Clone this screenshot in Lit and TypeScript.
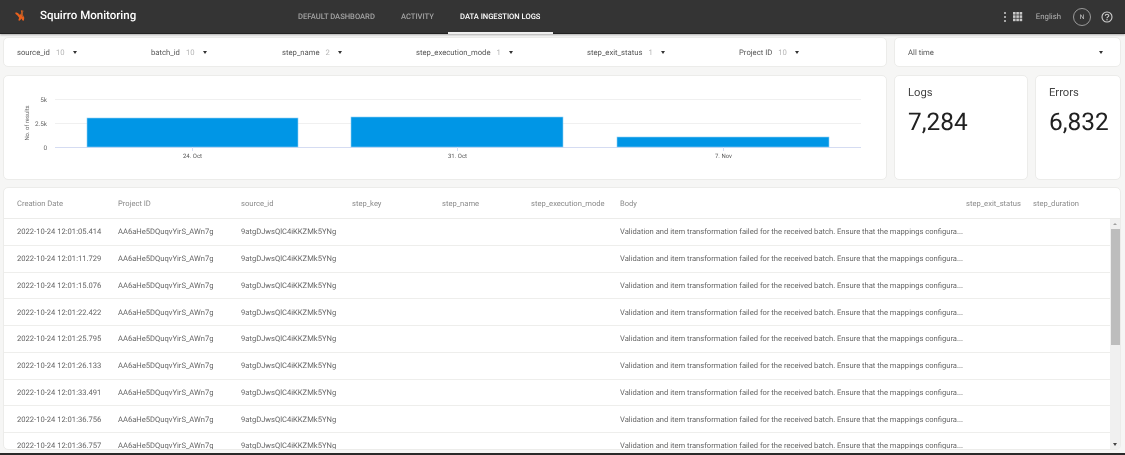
import { LitElement, html, css, svg } from "lit";
import { customElement } from "lit/decorators.js";

const filters: [string, string][] = [
  ["source_id", "10"], ["batch_id", "10"], ["step_name", "2"],
  ["step_execution_mode", "1"], ["step_exit_status", "1"], ["Project ID", "10"],
];
const columns = ["Creation Date", "Project ID", "source_id", "step_key", "step_name", "step_execution_mode", "Body", "step_exit_status", "step_duration"];
const times = ["05.414", "11.729", "15.076", "22.422", "25.795", "26.133", "33.491", "36.756", "36.757"];
const body = "Validation and item transformation failed for the received batch. Ensure that the mappings configura...";

@customElement("app-root")
export class AppRoot extends LitElement {
  static styles = css`
    :host { display: block; width: 1125px; height: 455px; overflow: hidden; background: #f6f6f5; font-family: Roboto, "Liberation Sans", sans-serif; color: #555; position: relative; text-rendering: geometricPrecision; filter: blur(0.3px); }
    header { height: 33px; background: #343434; border-bottom: 1px solid #222; box-shadow: 0 1px 2px rgba(0,0,0,.3); display: flex; align-items: stretch; color: #fff; box-sizing: content-box; }
    .brand { width: 298px; display: flex; align-items: center; padding-left: 14px; box-sizing: border-box; gap: 14px; font-size: 11.5px; font-weight: 500; padding-bottom: 3px; }
    nav { display: flex; }
    .tab { font-size: 7.6px; font-weight: 500; color: #a3a3a3; display: flex; align-items: center; padding-bottom: 1px; box-sizing: border-box; }
    .tab.one { width: 103px; }
    .tab.two { width: 47px; }
    .tab.active { color: #fff; width: 105px; padding-left: 12px; border-bottom: 2px solid #eee; padding-top: 1px; margin-bottom: -1px; }
    .right { margin-left: auto; display: flex; align-items: center; padding-right: 12px; }
    .dots { width: 2px; display: flex; flex-direction: column; gap: 2px; margin-right: 7px; }
    .dots i { width: 2px; height: 2px; border-radius: 50%; background: #ccc; }
    .lang { font-size: 7.8px; color: #b5b5b5; margin: 0 12px 0 13px; }
    .avatar { width: 16px; height: 16px; border: 1px solid #9a9a9a; border-radius: 50%; display: flex; align-items: center; justify-content: center; font-size: 6.5px; color: #ccc; margin-right: 10px; }
    main { padding: 3px 4px 0 3px; display: grid; grid-template-columns: 884px 227px; column-gap: 7px; }
    .card { background: #fff; border: 1px solid #ececea; border-radius: 5px; box-sizing: border-box; }
    .filters { height: 30px; display: grid; grid-template-columns: 134px 131px 134px 171px 152px 1fr; padding-left: 13px; align-items: center; font-size: 7.7px; color: #555; }
    .f { display: flex; align-items: center; }
    .f b { font-weight: 400; color: #b5b5b5; margin-left: 6px; }
    .caret { width: 0; height: 0; border-left: 2.5px solid transparent; border-right: 2.5px solid transparent; border-top: 3px solid #333; margin-left: 8px; }
    .time { height: 30px; display: flex; align-items: center; justify-content: space-between; padding: 0 17px 0 13px; font-size: 7.7px; }
    .second { display: grid; grid-template-columns: 884px 134px 86px; column-gap: 7px; padding: 8px 4px 0 3px; }
    .chart { height: 105px; display: block; }
    .chart svg { display: block; }
    .stat { height: 105px; padding: 10px 13px; color: #222; }
    .stat span { display: block; font-size: 11.2px; color: #444; line-height: 13px; }
    .stat strong { display: block; font-size: 24.4px; font-weight: 400; line-height: 28px; margin-top: 9px; color: #212121; }
    .table { margin: 7px 4px 0 3px; height: 263px; display: flex; flex-direction: column; overflow: hidden; }
    .row { display: grid; grid-template-columns: 101px 123px 111px 90px 89px 89px 346px 67px 1fr; padding-left: 13px; font-size: 7.6px; align-items: center; white-space: nowrap; }
    .head { height: 30px; flex: none; color: #8a8a8a; border-bottom: 1px solid #ececea; }
    .tbody { flex: 1; display: flex; min-height: 0; }
    .rows { flex: 1; min-width: 0; overflow: hidden; }
    .rows .row { height: 26.75px; box-sizing: border-box; border-bottom: 1px solid #eeeeec; color: #666; }
    .rows .row .b { grid-column: 7 / 10; }
    .sb { width: 10px; flex: none; background: #f0f0f0; display: flex; flex-direction: column; align-items: center; }
    .sb .up, .sb .down { height: 10px; width: 10px; display: flex; align-items: center; justify-content: center; flex: none; }
    .sb .up i { border-left: 2px solid transparent; border-right: 2px solid transparent; border-bottom: 2px solid #a0a0a0; }
    .sb .down { margin-top: auto; }
    .sb .down i { border-left: 2.5px solid transparent; border-right: 2.5px solid transparent; border-top: 3px solid #444; }
    .thumb { width: 9px; height: 116px; background: #bdbdbd; }
    .foot { position: absolute; left: 0; right: 0; top: 453px; height: 2px; background: #2a2a2a; }
  `;

  logo() {
    return svg`<svg width="12" height="13" viewBox="0 0 14 15" aria-hidden="true">
      <path d="M8 1.5 L11 2 L10 6 L12 10 L11.5 13.5 L9.5 13 L9 11 L6.5 13.5 L5 13 L6 10 L4 7.5 L1.5 5.5 L2 3.8 L4.5 4.5 L7 7 L8.5 4.5 Z" fill="#e8601c"/>
      <path d="M9.3 2.2 L10.6 2.4 L9.5 6 L10.8 9.5 L9.5 8.8 L8.6 6 Z" fill="#8d5a30"/>
    </svg>`;
  }

  grid() {
    const cells = [];
    for (let y = 0; y < 3; y++) for (let x = 0; x < 3; x++) cells.push(svg`<rect x=${x * 3.3} y=${y * 3.3} width="2.6" height="2.6"/>`);
    return svg`<svg width="10" height="10" viewBox="0 0 10 10" fill="#c8c8c8" aria-hidden="true">${cells}</svg>`;
  }

  help() {
    return svg`<svg width="12" height="12" viewBox="0 0 12 12" fill="none" stroke="#cfcfcf" aria-hidden="true">
      <circle cx="6" cy="6" r="5" stroke-width="1.1"/>
      <path d="M4.3 4.8 C4.3 2.8 7.8 2.8 7.8 4.7 C7.8 5.9 6 5.9 6 7.2" stroke-width="1.1"/>
      <circle cx="6" cy="8.8" r=".7" fill="#cfcfcf" stroke="none"/>
    </svg>`;
  }

  chart() {
    const grid = [[24, "5k"], [48, "2.5k"], [72, "0"]] as const;
    const bars = [[87, 43, 211, 29], [351, 42, 212, 30], [617, 62, 212, 10]];
    const ticks = [[192.5, "24. Oct"], [457.5, "31. Oct"], [723.5, "7. Nov"]] as const;
    return svg`<svg width="882" height="103" viewBox="1 1 882 103" font-family="Roboto, 'Liberation Sans', sans-serif">
      ${grid.map(([y, l], i) => svg`
        <line x1="52" x2="858" y1=${y + 0.5} y2=${y + 0.5} stroke=${i === 2 ? "#d5dcf2" : "#f0f0f0"}/>
        <text x="44" y=${y + 2.5} text-anchor="end" font-size="6.4" fill="#666">${l}</text>`)}
      ${bars.map(([x, y, w, h]) => svg`<rect x=${x - 3} y=${y} width=${w} height=${h} fill="#0096e6" stroke="#8fd0f5" stroke-width=".6"/>`)}
      ${ticks.map(([x, l]) => svg`
        <line x1=${x - 3} x2=${x - 3} y1="72" y2="76" stroke="#d5dcf2"/>
        <text x=${x - 3} y="82.5" text-anchor="middle" font-size="6" fill="#555">${l}</text>`)}
      <text transform="translate(26 48) rotate(-90)" text-anchor="middle" font-size="5.9" fill="#666">No. of results</text>
    </svg>`;
  }

  render() {
    return html`
      <header>
        <div class="brand">${this.logo()}<span>Squirro Monitoring</span></div>
        <nav>
          <div class="tab one">DEFAULT DASHBOARD</div>
          <div class="tab two">ACTIVITY</div>
          <div class="tab active">DATA INGESTION LOGS</div>
        </nav>
        <div class="right">
          <div class="dots"><i></i><i></i><i></i></div>
          ${this.grid()}
          <span class="lang">English</span>
          <div class="avatar">N</div>
          ${this.help()}
        </div>
      </header>
      <main>
        <div class="card filters">
          ${filters.map(([n, c]) => html`<div class="f">${n}<b>${c}</b><span class="caret"></span></div>`)}
        </div>
        <div class="card time"><span>All time</span><span class="caret"></span></div>
      </main>
      <div class="second">
        <div class="card chart">${this.chart()}</div>
        <div class="card stat"><span>Logs</span><strong>7,284</strong></div>
        <div class="card stat"><span>Errors</span><strong>6,832</strong></div>
      </div>
      <div class="card table">
        <div class="row head">${columns.map((c) => html`<div>${c}</div>`)}</div>
        <div class="tbody">
          <div class="rows">
            ${times.map((t) => html`<div class="row">
              <div>2022-10-24 12:01:${t}</div>
              <div>AA6aHe5DQuqvYirS_AWn7g</div>
              <div>9atgDJwsQlC4iKKZMk5YNg</div>
              <div></div><div></div><div></div>
              <div class="b">${body}</div>
            </div>`)}
          </div>
          <div class="sb">
            <div class="up"><i></i></div>
            <div class="thumb"></div>
            <div class="down"><i></i></div>
          </div>
        </div>
      </div>
      <div class="foot"></div>
    `;
  }
}
